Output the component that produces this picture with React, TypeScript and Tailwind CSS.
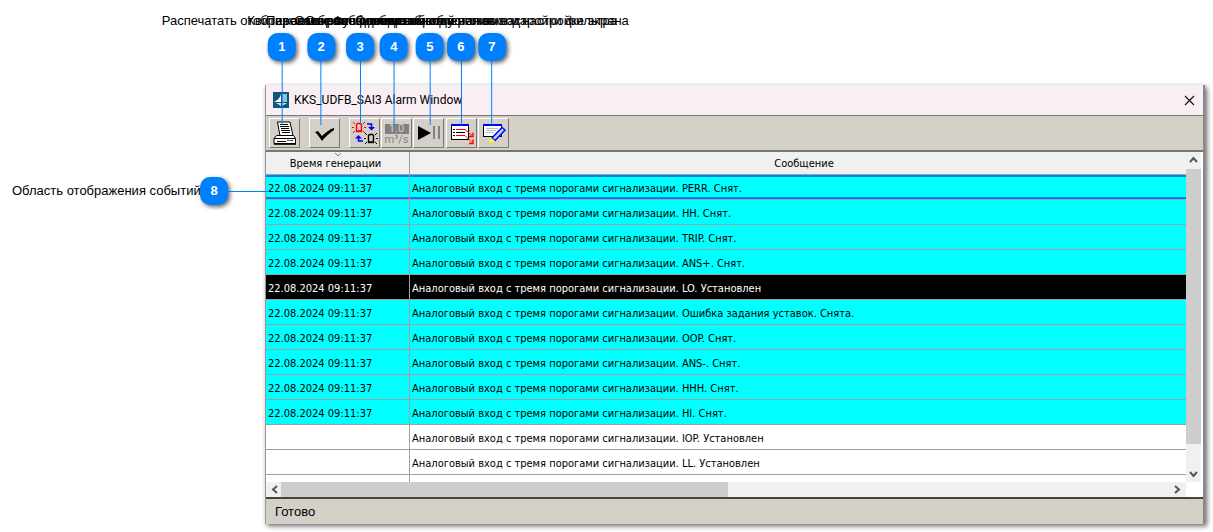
import { useState } from 'react';
import type { ReactNode } from 'react';

const CALLOUTS = [
  { n: 1, left: 'left-[282px]', text: 'Распечатать отображаемые сообщения' },
  { n: 2, left: 'left-[321px]', text: 'Квитировать сообщения' },
  { n: 3, left: 'left-[360px]', text: 'Переключение режима вывода' },
  { n: 4, left: 'left-[394px]', text: 'Отображение единиц измерения' },
  { n: 5, left: 'left-[430px]', text: 'Функция возобновления вывода' },
  { n: 6, left: 'left-[461px]', text: 'Открыть список событий и окно настройки фильтра' },
  { n: 7, left: 'left-[492px]', text: 'Сообщения об установке и настройке экрана' },
];

const TIME = '22.08.2024 09:11:37';
const PREFIX = 'Аналоговый вход с тремя порогами сигнализации. ';

const EVENTS = [
  { time: TIME, message: 'PERR. Снят.' },
  { time: TIME, message: 'HH. Снят.' },
  { time: TIME, message: 'TRIP. Снят.' },
  { time: TIME, message: 'ANS+. Снят.' },
  { time: TIME, message: 'LO. Установлен' },
  { time: TIME, message: 'Ошибка задания уставок. Снята.' },
  { time: TIME, message: 'OOP. Снят.' },
  { time: TIME, message: 'ANS-. Снят.' },
  { time: TIME, message: 'HHH. Снят.' },
  { time: TIME, message: 'HI. Снят.' },
  { time: '', message: 'IOP. Установлен' },
  { time: '', message: 'LL. Установлен' },
];

function rowColor(time: string, message: string) {
  if (message.startsWith('LO.')) return 'bg-black text-white';
  return time ? 'bg-[#00ffff]' : 'bg-white';
}

function Badge({ n }: { n: number }) {
  return (
    <span className="flex h-7 w-7 shrink-0 items-center justify-center rounded-[10px] bg-[#0080ff] text-[13px] font-bold text-white shadow-[2px_2px_4px_rgba(0,0,0,0.6)]">
      {n}
    </span>
  );
}

function ToolButton({ label, className = '', children }: { label: string; className?: string; children: ReactNode }) {
  return (
    <button
      type="button"
      aria-label={label}
      className={`flex h-[30px] w-[31px] shrink-0 items-center justify-center border border-t-white border-r-[#777] border-b-[#777] border-l-white bg-[#d4d0c8] ${className}`}
    >
      {children}
    </button>
  );
}

function PrinterIcon() {
  return (
    <svg width="24" height="24" viewBox="0 0 24 24">
      <path d="M4.5 1H17L20 15H7Z" fill="#fff" stroke="#000" />
      <path d="M7 3.5H15M7 5.5H16M8 7.5H16M8 9.5H17M9 11.5H17" stroke="#000" />
      <path d="M3.5 14.5H20.5L22.5 17.5V22.5H1V17.5Z" fill="#fff" stroke="#000" />
      <path d="M5 14.5H20M1 17.5H22M4 20.5H13" stroke="#000" />
      <path d="M1 23H23" stroke="#000" strokeWidth="1.6" />
      <path d="M14 19.5H16" stroke="#f00" />
      <path d="M16 19.5H18" stroke="#0b0" />
      <path d="M18 19.5H20" stroke="#00f" />
    </svg>
  );
}

function CheckIcon() {
  return (
    <svg width="24" height="24" viewBox="0 0 24 24">
      <path d="M2 11L5 10L9 15C13 11 17 8 21 7V9C17 12 13 15 9 20C7 17 5 14 2 11Z" fill="#000" />
    </svg>
  );
}

function Lamp({ x, y, color }: { x: number; y: number; color: string }) {
  return (
    <g transform={`translate(${x} ${y})`} stroke={color} fill="none">
      <path d="M4.5 3.5L5.5 2.5H8.5L9.5 3.5V10H4.5Z" strokeWidth="1.4" />
      <path d="M4 10.5H10" strokeWidth="1.4" />
      <path d="M1 1L3 3M13 1L11 3M0 6.5H2M12 6.5H14M1 12L3 10M13 12L11 10" />
    </g>
  );
}

function LampsIcon() {
  return (
    <svg width="26" height="26" viewBox="0 0 26 26">
      <Lamp x={0} y={1} color="#f00" />
      <Lamp x={12} y={12} color="#000" />
      <path d="M15 4H19.5V7" fill="none" stroke="#00f" strokeWidth="1.6" />
      <path d="M16 7H23L19.5 10.5Z" fill="#00f" />
      <path d="M11 21H6.5V18" fill="none" stroke="#00f" strokeWidth="1.6" />
      <path d="M3 18.5H10L6.5 15Z" fill="#00f" />
    </svg>
  );
}

function FilterListIcon() {
  return (
    <svg width="26" height="24" viewBox="0 0 26 24">
      <rect x="2.5" y="4.5" width="17" height="14" fill="#fff" stroke="#000" />
      <path d="M2 4H20" stroke="#00f" strokeWidth="2" />
      <path d="M4 8.5H6M4 11.5H6M4 14.5H6M7 11.5H16" stroke="#000" />
      <path d="M7 8.5H16L23 14.5M7 14.5H16L23 21.5" fill="none" stroke="#f00" />
      <path d="M24 11.5V15.5H20M24 18.5V22.5H20" fill="none" stroke="#f00" strokeWidth="1.4" />
    </svg>
  );
}

function EditIcon() {
  return (
    <svg width="26" height="24" viewBox="0 0 26 24">
      <rect x="2.5" y="4.5" width="18" height="11" fill="#fff" stroke="#000" />
      <path d="M2 4H21" stroke="#00f" strokeWidth="2" />
      <path d="M5 7.5H17M5 9.5H15M5 11.5H13" stroke="#bbb" />
      <path d="M21 6.5L24 9L14 19.5L11 17Z" fill="#b8d8ff" stroke="#00f" strokeWidth="1.5" />
      <path d="M10 16.5L14 20L8 22Z" fill="#ff0" />
    </svg>
  );
}

function LogoIcon() {
  return (
    <svg width="16" height="16" viewBox="0 0 16 16">
      <rect width="16" height="16" fill="#115579" />
      <path d="M8 2V10H1C5 8 7 6 8 2Z" fill="#fff" />
      <path d="M9 2H14V10H9Z" fill="#8cc3d6" />
      <path d="M3 11H8V14ZM9 11H14L9 14Z" fill="#cfe7ef" />
    </svg>
  );
}

function Arrow({ d }: { d: string }) {
  return (
    <svg width="9" height="9" viewBox="0 0 9 9">
      <path d={d} fill="none" stroke="#555" strokeWidth="2" />
    </svg>
  );
}

function Toolbar() {
  return (
    <div role="toolbar" className="flex h-[37px] items-center border-t border-b-2 border-t-[#777] border-b-[#777] bg-[#d4d0c8] pl-[3px]">
      <ToolButton label="Печать"><PrinterIcon /></ToolButton>
      <ToolButton label="Квитировать" className="ml-[9px]"><CheckIcon /></ToolButton>
      <ToolButton label="Режим" className="ml-[9px]"><LampsIcon /></ToolButton>
      <ToolButton label="Единицы" className="ml-px">
        <span className="flex flex-col items-center pt-1 font-[Roboto] text-[11px] text-[#808080]">
          <span className="h-[10px] w-6 bg-[#808080] leading-[10px] text-[#d4d0c8]">1.0</span>
          <span className="leading-3">m³/s</span>
        </span>
      </ToolButton>
      <ToolButton label="Пауза" className="ml-px">
        <svg width="26" height="24" viewBox="0 0 26 24">
          <path d="M2 5L15 12L2 19Z" fill="#000" />
          <path d="M18 5V18M23 5V18" stroke="#808080" strokeWidth="2" />
        </svg>
      </ToolButton>
      <ToolButton label="Список" className="ml-0.5"><FilterListIcon /></ToolButton>
      <ToolButton label="Фильтр" className="ml-px"><EditIcon /></ToolButton>
    </div>
  );
}

export default function App() {
  const [selected, setSelected] = useState(0);

  return (
    <div className="relative bg-white pt-[85px] pr-2 pb-2 font-['Liberation_Sans',sans-serif] text-black">
      <div className="flex items-start">
        <aside className="flex w-[265px] shrink-0 items-center pt-[92px] pl-3">
          <span className="w-[188px] text-[13px] whitespace-nowrap">Область отображения событий</span>
          <Badge n={8} />
        </aside>

        <main className="min-w-0 flex-1 border-r-2 border-r-[#888] border-l border-l-[#999] shadow-[2px_2px_5px_rgba(0,0,0,0.6)]">
          <header className="flex h-[30px] items-center bg-[#f9eef3] pr-2 pl-[7px]">
            <LogoIcon />
            <h1 className="ml-[5px] font-[Roboto] text-xs">KKS_UDFB_SAI3 Alarm Window</h1>
            <button type="button" aria-label="Закрыть" className="ml-auto">
              <svg width="11" height="11" viewBox="0 0 11 11">
                <path d="M1 1L10 10M10 1L1 10" stroke="#111" strokeWidth="1.2" />
              </svg>
            </button>
          </header>

          <Toolbar />

          <div className="flex h-[345px] bg-white pr-[2px]">
            <div className="flex min-w-0 flex-1 flex-col">
              <div className="min-h-0 flex-1 overflow-hidden">
                <table className="w-full table-fixed border-separate border-spacing-0 font-['DejaVu_Sans_Condensed'] text-[11px]">
                  <thead>
                    <tr className="h-[23px] bg-[#f0f0f0]">
                      <th className="relative w-36 border-r border-b border-[#a0a0a0] p-0 pt-0.5 pr-1 font-normal">
                        <svg className="absolute top-0 left-[68px]" width="8" height="5" viewBox="0 0 8 5">
                          <path d="M1 1L4 4L7 1" fill="none" stroke="#888" />
                        </svg>
                        Время генерации
                      </th>
                      <th className="border-b border-[#a0a0a0] p-0 pt-0.5 pl-3 font-normal">Сообщение</th>
                    </tr>
                  </thead>
                  <tbody>
                    {EVENTS.map((event, i) => (
                      <tr
                        key={event.message}
                        onClick={() => setSelected(i)}
                        className={`h-[25px] ${rowColor(event.time, event.message)} ${i === selected ? 'shadow-[inset_0_2px_#0080ff,inset_0_-3px_#0080ff]' : ''}`}
                      >
                        <td className="border-r border-b border-[#a0a0a0] p-0 pt-1 pl-0.5">{event.time}</td>
                        <td className="border-b border-[#a0a0a0] p-0 pt-1 pl-0.5">{PREFIX + event.message}</td>
                      </tr>
                    ))}
                    <tr className="h-[25px]">
                      <td className="border-r border-[#a0a0a0]" />
                      <td />
                    </tr>
                  </tbody>
                </table>
              </div>
              <div className="flex h-[15px] shrink-0 items-center justify-between bg-[#f0f0f0] pr-1 pl-1">
                <Arrow d="M7 1L3 4.5L7 8" />
                <span className="mr-auto ml-[2px] h-full w-[49%] bg-[#cdcdcd]" />
                <Arrow d="M2 1L6 4.5L2 8" />
              </div>
            </div>
            <div className="mb-[15px] flex w-[15px] shrink-0 flex-col items-center bg-[#f0f0f0] py-1">
              <Arrow d="M1 6L4.5 2L8 6" />
              <span className="mt-1 mb-auto h-[275px] w-full bg-[#cdcdcd]" />
              <Arrow d="M1 3L4.5 7L8 3" />
            </div>
          </div>

          <footer className="flex h-[27px] items-center border-t-2 border-[#444] bg-[#d4d0c8] pt-px pl-[9px] text-[13px]">Готово</footer>
        </main>
      </div>

      {CALLOUTS.map(({ n, left, text }) => (
        <div key={n} className={`pointer-events-none absolute top-[13px] flex -translate-x-1/2 flex-col items-center ${left}`}>
          <span className="mb-1 h-4 text-[13px] leading-4 whitespace-nowrap">{text}</span>
          <Badge n={n} />
          <span className="h-16 w-px bg-[#0080ff]" />
        </div>
      ))}
      <span className="pointer-events-none absolute top-[191px] left-[228px] h-px w-10 bg-[#0080ff]" />
    </div>
  );
}
